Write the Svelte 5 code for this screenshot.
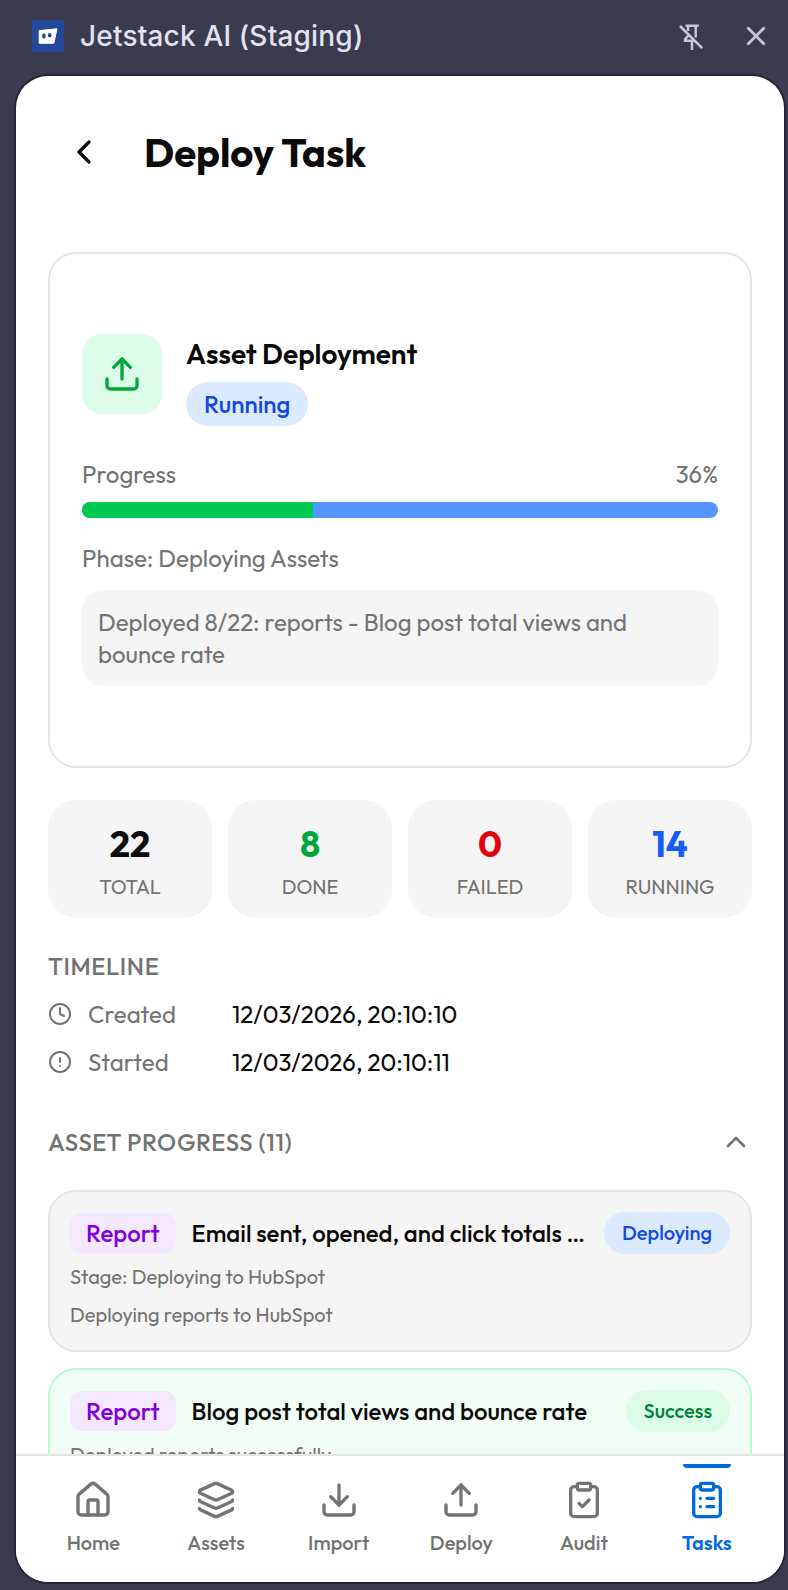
<script lang="ts">
    interface Stat {
        label: string;
        value: number;
        tone: string;
    }

    interface AssetItem {
        type: string;
        name: string;
        status: string;
        tone: string;
        lines: string[];
    }

    const total = 22;
    const done = 8;
    const percent = (done / total) * 100;

    const stats: Stat[] = [
        { label: 'TOTAL', value: total, tone: 'dark' },
        { label: 'DONE', value: done, tone: 'green' },
        { label: 'FAILED', value: 0, tone: 'red' },
        { label: 'RUNNING', value: total - done, tone: 'blue' }
    ];

    const timeline = [
        { icon: 'clock', label: 'Created', date: '12/03/2026, 20:10:10' },
        { icon: 'alert', label: 'Started', date: '12/03/2026, 20:10:11' }
    ];

    const assets: AssetItem[] = [
        {
            type: 'Report',
            name: 'Email sent, opened, and click totals …',
            status: 'Deploying',
            tone: 'deploying',
            lines: ['Stage: Deploying to HubSpot', 'Deploying reports to HubSpot']
        },
        {
            type: 'Report',
            name: 'Blog post total views and bounce rate',
            status: 'Success',
            tone: 'success',
            lines: ['Deployed reports successfully']
        }
    ];

    const tabs = ['Home', 'Assets', 'Import', 'Deploy', 'Audit', 'Tasks'];
    let active_tab = $state('Tasks');
    let show_assets = $state(true);
</script>

<!-- 24x24 stroke icons -->
{#snippet icon(name: string, size: number)}
    <svg
        width={size}
        height={size}
        viewBox="0 0 24 24"
        fill="none"
        stroke="currentColor"
        stroke-width="2"
        stroke-linecap="round"
        stroke-linejoin="round"
        aria-hidden="true"
    >
        {#if name === 'back'}
            <path d="m15 18-6-6 6-6" />
        {:else if name === 'up'}
            <path d="m18 15-6-6-6 6" />
        {:else if name === 'clock'}
            <circle cx="12" cy="12" r="10" />
            <path d="M12 6v6l4 2" />
        {:else if name === 'alert'}
            <circle cx="12" cy="12" r="10" />
            <path d="M12 8v4M12 16h.01" />
        {:else if name === 'Home'}
            <path d="M15 21v-8a1 1 0 0 0-1-1h-4a1 1 0 0 0-1 1v8" />
            <path d="M3 10a2 2 0 0 1 .709-1.528l7-6a2 2 0 0 1 2.582 0l7 6A2 2 0 0 1 21 10v9a2 2 0 0 1-2 2H5a2 2 0 0 1-2-2z" />
        {:else if name === 'Assets'}
            <path d="M12.83 2.18a2 2 0 0 0-1.66 0L2.6 6.08a1 1 0 0 0 0 1.83l8.58 3.91a2 2 0 0 0 1.66 0l8.58-3.9a1 1 0 0 0 0-1.83z" />
            <path d="M2 12a1 1 0 0 0 .58.91l8.6 3.91a2 2 0 0 0 1.65 0l8.58-3.9A1 1 0 0 0 22 12" />
            <path d="M2 17a1 1 0 0 0 .58.91l8.6 3.91a2 2 0 0 0 1.65 0l8.58-3.9A1 1 0 0 0 22 17" />
        {:else if name === 'Import'}
            <path d="M12 15V3" />
            <path d="M21 15v4a2 2 0 0 1-2 2H5a2 2 0 0 1-2-2v-4" />
            <path d="m7 10 5 5 5-5" />
        {:else if name === 'Deploy'}
            <path d="M12 3v12" />
            <path d="m17 8-5-5-5 5" />
            <path d="M21 15v4a2 2 0 0 1-2 2H5a2 2 0 0 1-2-2v-4" />
        {:else}
            <rect x="8" y="2" width="8" height="4" rx="1" />
            <path d="M16 4h2a2 2 0 0 1 2 2v14a2 2 0 0 1-2 2H6a2 2 0 0 1-2-2V6a2 2 0 0 1 2-2h2" />
            {#if name === 'Audit'}
                <path d="m9 14 2 2 4-4" />
            {:else}
                <path d="M12 11h4M12 16h4M8 11h.01M8 16h.01" />
            {/if}
        {/if}
    </svg>
{/snippet}

<div class="window">
    <header class="titlebar">
        <svg class="logo" width="32" height="32" viewBox="0 0 32 32" aria-hidden="true">
            <rect width="32" height="32" fill="#24479a" />
            <path d="M7.2 10.6 25 8.8 21.8 23.3H7.2z" fill="#fff" stroke="#fff" stroke-linejoin="round" />
            <ellipse cx="11.9" cy="16" rx="1.8" ry="2.7" fill="#24479a" />
            <ellipse cx="17.7" cy="15.2" rx="1.8" ry="2.2" fill="#24479a" />
        </svg>
        <span class="app-name">Jetstack AI (Staging)</span>
        <button class="bar-btn pin" aria-label="Unpin">
            <svg width="26" height="28" viewBox="0 0 26 28" fill="none" stroke="currentColor" stroke-width="2.5">
                <path d="M2 3 24.2 25.2" />
                <path d="M7.5 2.8H20.7M17.7 2.8V14.5M10 3v5M11 12l-4 4.3v1.4h10M14 18v9" />
            </svg>
        </button>
        <button class="bar-btn" aria-label="Close">
            <svg width="20" height="20" viewBox="0 0 20 20" fill="none" stroke="currentColor" stroke-width="2.8">
                <path d="m1.5 1.5 17 17M18.5 1.5l-17 17" />
            </svg>
        </button>
    </header>

    <main class="panel">
        <div class="content">
            <div class="page-head">
                <button class="back" aria-label="Back">{@render icon('back', 40)}</button>
                <h1>Deploy Task</h1>
            </div>

            <section class="card">
                <div class="summary">
                    <div class="tile">{@render icon('Deploy', 40)}</div>
                    <div>
                        <h2>Asset Deployment</h2>
                        <span class="status">Running</span>
                    </div>
                </div>
                <div class="progress-label">
                    <span>Progress</span>
                    <span>{Math.round(percent)}%</span>
                </div>
                <div class="bar">
                    <div class="bar-done" style="width: {percent}%"></div>
                </div>
                <p class="phase">Phase: Deploying Assets</p>
                <p class="message">Deployed 8/22: reports - Blog post total views and bounce rate</p>
            </section>

            <section class="stats">
                {#each stats as stat}
                    <div class="stat">
                        <strong class={stat.tone}>{stat.value}</strong>
                        <span>{stat.label}</span>
                    </div>
                {/each}
            </section>

            <section class="timeline">
                <h3>TIMELINE</h3>
                {#each timeline as event}
                    <div class="event">
                        {@render icon(event.icon, 24)}
                        <span class="event-label">{event.label}</span>
                        <span class="date">{event.date}</span>
                    </div>
                {/each}
            </section>

            <button class="toggle" onclick={() => (show_assets = !show_assets)}>
                <h3>ASSET PROGRESS (11)</h3>
                {@render icon('up', 32)}
            </button>

            {#if show_assets}
                <div class="assets">
                    {#each assets as asset}
                        <article class="asset {asset.tone}">
                            <div class="asset-head">
                                <span class="type">{asset.type}</span>
                                <span class="name">{asset.name}</span>
                                <span class="badge">{asset.status}</span>
                            </div>
                            {#each asset.lines as line}
                                <p>{line}</p>
                            {/each}
                        </article>
                    {/each}
                </div>
            {/if}
        </div>

        <nav>
            {#each tabs as tab}
                <button class="tab" class:active={tab === active_tab} onclick={() => (active_tab = tab)}>
                    {@render icon(tab, 40)}
                    <span>{tab}</span>
                </button>
            {/each}
        </nav>
    </main>
</div>

<style>
    :global(body) {
        margin: 0;
        background: #3a3b4f;
    }

    .window {
        box-sizing: border-box;
        display: flex;
        flex-direction: column;
        width: 788px;
        height: 1590px;
        padding: 0 4px 8px 16px;
        background: #3a3b4f;
        font-family: 'Outfit', 'Lato', sans-serif;
        font-size: 24px;
        line-height: 32px;
        color: #0a0a0a;
    }

    h1, h2, h3, p {
        margin: 0;
    }

    button {
        padding: 0;
        border: none;
        background: none;
        color: inherit;
        font: inherit;
        cursor: pointer;
    }

    svg {
        display: block;
        flex-shrink: 0;
    }

    /* Browser side panel bar */
    .titlebar {
        box-sizing: border-box;
        display: flex;
        align-items: center;
        flex-shrink: 0;
        height: 76px;
        padding: 0 18px 4px 16px;
        color: #c9c6d9;
    }

    .app-name {
        flex: 1;
        margin-left: 16px;
        font-family: 'Inter', sans-serif;
        font-size: 28px;
        font-weight: 500;
        letter-spacing: 0.18px;
        color: #e4e1f2;
    }

    .pin {
        margin: 2px 42px 0 0;
    }

    .panel {
        display: flex;
        flex-direction: column;
        flex: 1;
        min-height: 0;
        border-radius: 32px;
        background: #fff;
        box-shadow: 0 0 0 2px #25233a;
        overflow: hidden;
    }

    .content {
        flex: 1;
        min-height: 0;
        padding: 52px 32px 0;
        overflow: hidden;
    }

    .page-head {
        display: flex;
        align-items: center;
        gap: 40px;
        height: 48px;
        margin-bottom: 76px;
        padding-left: 16px;
    }

    h1 {
        font-size: 40px;
        font-weight: 700;
        line-height: 48px;
    }

    /* Task summary */
    .card {
        padding: 80px 32px;
        border: 2px solid #e5e5e5;
        border-radius: 28px;
    }

    .summary {
        display: flex;
        gap: 24px;
        margin-bottom: 32px;
    }

    .tile {
        display: flex;
        align-items: center;
        justify-content: center;
        width: 80px;
        height: 80px;
        border-radius: 20px;
        background: #dcfce7;
        color: #00a63e;
    }

    h2 {
        margin-bottom: 8px;
        font-size: 28px;
        font-weight: 600;
        line-height: 40px;
    }

    .status {
        display: block;
        width: fit-content;
        padding: 0 18px;
        border-radius: 22px;
        background: #dbeafe;
        color: #1447e6;
        font-weight: 500;
        line-height: 44px;
    }

    .progress-label {
        display: flex;
        justify-content: space-between;
        margin-bottom: 12px;
        color: #737373;
    }

    .bar {
        height: 16px;
        margin-bottom: 24px;
        border-radius: 8px;
        background: #5595ff;
        overflow: hidden;
    }

    .bar-done {
        height: 100%;
        background: #00c950;
    }

    .phase {
        margin-bottom: 16px;
        color: #737373;
    }

    .message {
        padding: 16px;
        border-radius: 20px;
        background: #f5f5f5;
        color: #737373;
    }

    /* Counters */
    .stats {
        display: grid;
        grid-template-columns: repeat(4, 1fr);
        gap: 16px;
        margin: 32px 0;
    }

    .stat {
        display: flex;
        flex-direction: column;
        align-items: center;
        gap: 9px;
        padding: 24px 0 17px;
        border-radius: 28px;
        background: #f5f5f5;
    }

    .stat strong {
        font-size: 36px;
        line-height: 40px;
    }

    .stat span {
        font-size: 20px;
        line-height: 28px;
        color: #737373;
    }

    .green {
        color: #00a63e;
    }

    .red {
        color: #e7000b;
    }

    .blue {
        color: #155dfc;
    }

    .timeline {
        display: flex;
        flex-direction: column;
        gap: 16px;
        margin-bottom: 48px;
    }

    h3 {
        font-size: 24px;
        font-weight: 500;
        letter-spacing: 0.6px;
        color: #737373;
    }

    .event {
        display: flex;
        align-items: center;
        color: #737373;
    }

    .event-label {
        width: 128px;
        margin: 0 16px;
    }

    .date {
        color: #0a0a0a;
    }

    .toggle {
        display: flex;
        justify-content: space-between;
        width: 100%;
        margin-bottom: 32px;
        color: #737373;
    }

    /* Asset list */
    .assets {
        display: flex;
        flex-direction: column;
        gap: 16px;
    }

    .asset {
        padding: 20px 20px 21px;
        border: 2px solid #e5e5e5;
        border-radius: 28px;
        background: #f5f5f5;
    }

    .asset-head {
        display: flex;
        align-items: center;
        margin-bottom: 9px;
        font-weight: 500;
    }

    .type {
        padding: 0 16px;
        border-radius: 12px;
        background: #f3e8ff;
        color: #8200db;
        line-height: 40px;
    }

    .name {
        flex: 1;
        margin: 0 16px;
        white-space: nowrap;
    }

    .badge {
        padding: 0 18px;
        border-radius: 21px;
        background: #dbeafe;
        color: #1447e6;
        font-size: 20px;
        line-height: 42px;
    }

    .asset p {
        font-size: 20px;
        line-height: 28px;
        color: #737373;
    }

    .asset p + p {
        margin-top: 10px;
    }

    .asset.success {
        border-color: #b9f8cf;
        background: #f0fdf4;
    }

    .success .badge {
        background: #dcfce7;
        color: #008236;
    }

    /* Bottom navigation */
    nav {
        display: flex;
        flex-shrink: 0;
        height: 126px;
        padding: 0 16px;
        border-top: 2px solid #e5e5e5;
        background: #fff;
    }

    .tab {
        position: relative;
        display: flex;
        flex: 1;
        flex-direction: column;
        align-items: center;
        gap: 9px;
        padding-top: 24px;
        color: #737373;
        font-size: 20px;
        font-weight: 500;
        line-height: 28px;
    }

    .tab.active {
        color: #0069dc;
        font-weight: 600;
    }

    .tab.active::before {
        content: '';
        position: absolute;
        top: 8px;
        width: 48px;
        height: 4px;
        border-radius: 0 0 4px 4px;
        background: #0069dc;
    }
</style>
